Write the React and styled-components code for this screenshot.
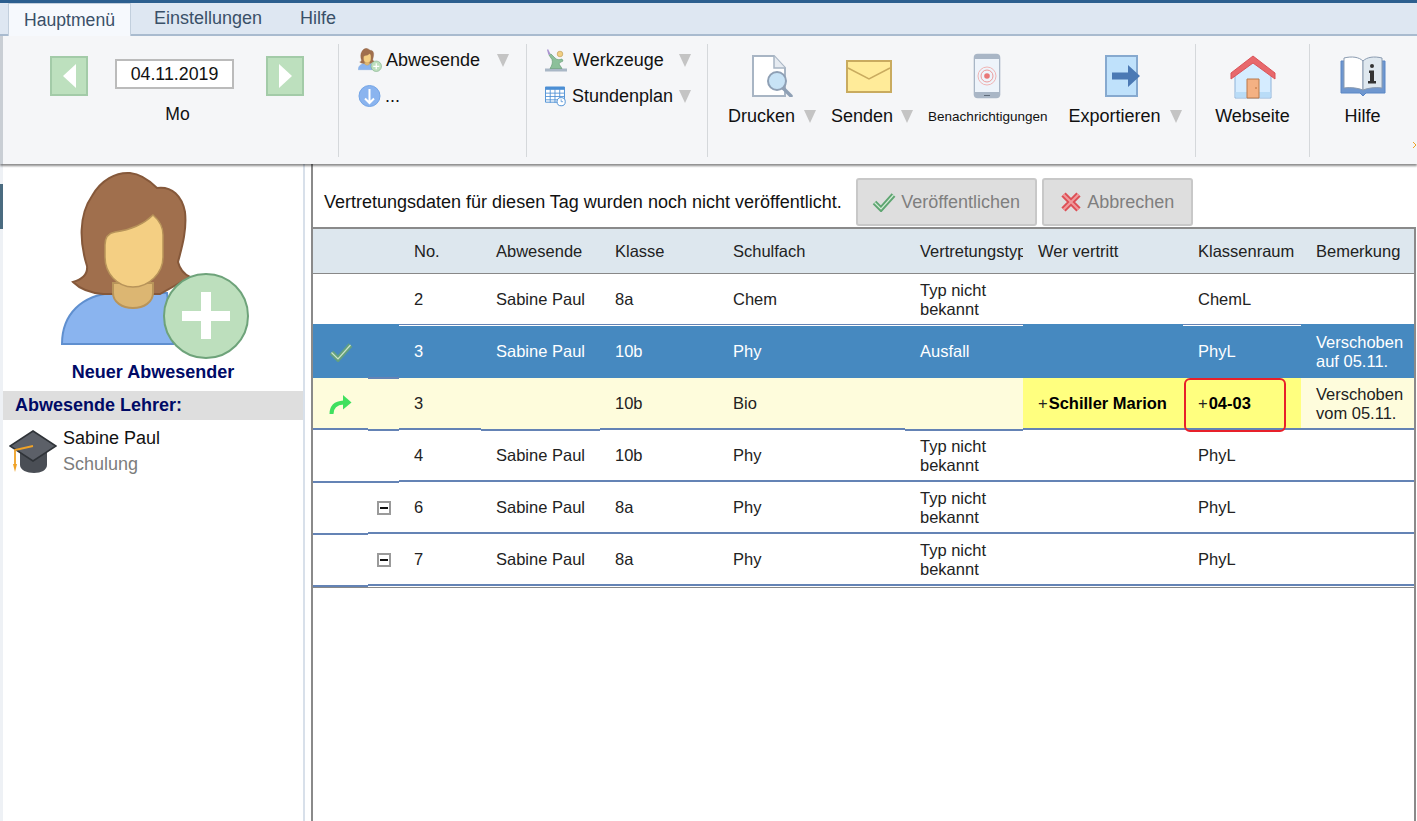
import React from 'react';
import styled, { createGlobalStyle } from 'styled-components';

const GlobalStyle = createGlobalStyle`
  html, body {
    margin: 0;
    padding: 0;
    height: 100%;
    overflow: hidden;
    background: #fff;
  }
  body {
    font-family: "Liberation Sans", Arial, sans-serif;
    color: #111;
  }
`;

const COLUMNS = '55px 31px 82px 119px 118px 187px 118px 160px 118px 113px';
const LINE = '#6483b5';
const BLUE = '#4689c0';
const SPLIT = `linear-gradient(${LINE} 50%, #fff 50%)`;

const rows = [
  {
    tone: 'plain',
    cells: ['2', 'Sabine Paul', '8a', 'Chem', 'Typ nicht bekannt', '', 'ChemL', ''],
    line: SPLIT,
    lineAt: { 0: BLUE, 1: BLUE, 7: BLUE, 9: BLUE },
    drops: [],
  },
  {
    tone: 'selected',
    mark: 'check',
    cells: ['3', 'Sabine Paul', '10b', 'Phy', 'Ausfall', '', 'PhyL', 'Verschoben auf 05.11.'],
    line: BLUE,
    lineAt: { 1: LINE },
    drops: [1],
  },
  {
    tone: 'moved',
    mark: 'arrow',
    cells: ['3', '', '10b', 'Bio', '', 'Schiller Marion', '04-03', 'Verschoben vom 05.11.'],
    added: [5, 6],
    boxed: 6,
    line: LINE,
    drops: [1, 3, 6],
  },
  {
    tone: 'plain',
    cells: ['4', 'Sabine Paul', '10b', 'Phy', 'Typ nicht bekannt', '', 'PhyL', ''],
    line: LINE,
    drops: [0, 1],
  },
  {
    tone: 'plain',
    toggle: true,
    cells: ['6', 'Sabine Paul', '8a', 'Phy', 'Typ nicht bekannt', '', 'PhyL', ''],
    line: LINE,
    drops: [0],
  },
  {
    tone: 'plain',
    toggle: true,
    cells: ['7', 'Sabine Paul', '8a', 'Phy', 'Typ nicht bekannt', '', 'PhyL', ''],
    line: LINE,
    drops: [0],
  },
];

const headers = ['', '', 'No.', 'Abwesende', 'Klasse', 'Schulfach', 'Vertretungstyp', 'Wer vertritt', 'Klassenraum', 'Bemerkung'];

const WomanIcon = ({ size, plusStroke = 2 }) => (
  <svg width={size} height={size} viewBox="60 170 192 192">
    <path d="M62 344c0-30 20-49 51-51h54l6 51z" fill="#8ab4ef" stroke="#5f8fcf" strokeWidth="2" />
    <path d="M73 282c10-3 15-8 14-16-7-22-9-50 5-70 9-16 24-24 38-23 11 1 20 8 27 15 15-2 25 8 28 24 2 18-3 35-7 50 2 8 6 12 12 15l-30 17H103c-12-1-23-5-30-12z" fill="#a06f4d" stroke="#85583a" strokeWidth="2" />
    <path d="M113 283h40v10c0 9-9 15-20 15s-20-6-20-15z" fill="#dcb672" stroke="#b8945a" strokeWidth="2" />
    <path d="M105 245c0-8 4-12 10-13 15-2 28-7 38-17 7 6 10 12 10 20v22c0 16-14 30-30 30s-28-14-28-30z" fill="#f4cf83" stroke="#b8945a" strokeWidth="1.5" />
    <circle cx="206" cy="316" r="42" fill="#bddfbd" stroke="#6ea37a" strokeWidth={plusStroke} />
    <path d="M201 292h10v19h19v10h-19v18h-10v-18h-19v-10h19z" fill="#fff" />
  </svg>
);

const InfoDownIcon = () => (
  <svg width="23" height="24" viewBox="0 0 23 24">
    <circle cx="11.500" cy="12" r="10.500" fill="#8ab4ef" stroke="#74a5e6" />
    <path d="M11.500 5v14M7 14.500l4.500 4.500 4.500-4.500" fill="none" stroke="#fff" strokeWidth="2" />
  </svg>
);

const ToolsIcon = () => (
  <svg width="22" height="24" viewBox="0 0 22 24">
    <path d="M0 20.500h22v3H0z" fill="#a9b7c6" />
    <path d="M5 20.500c2-3 3-6 2-9L4 7l2-1 4 4c2 2 4 2 7 1l1 2c-2 1-4 2-4 3l3 4.500z" fill="#8cc09a" stroke="#6a9d79" strokeWidth=".7" />
    <circle cx="15" cy="6" r="2.800" fill="#f2cf83" stroke="#c2a15c" strokeWidth=".7" />
    <path d="M3 1l2.500 5-2 1L2 2z" fill="#a994d0" />
  </svg>
);

const PlanIcon = () => (
  <svg width="22" height="22" viewBox="0 0 22 22">
    <path d="M.5 1.500h20v16H.5z" fill="#fff" stroke="#4b8ed4" />
    <path d="M.5 1.500h20v3H.5z" fill="#4b8ed4" />
    <path d="M5.500 4v14M10.500 4v14M15.500 4v14M1 8h19M1 11.500h19M1 15h19" stroke="#4b8ed4" strokeWidth=".9" fill="none" />
    <circle cx="17" cy="17" r="4.300" fill="#fff" stroke="#4b8ed4" />
    <path d="M17 14.500V17h2" fill="none" stroke="#4b8ed4" strokeWidth=".8" />
  </svg>
);

const PrintIcon = () => (
  <svg width="41" height="42" viewBox="0 0 41 42">
    <path d="M1 1h21l11 12v28H1z" fill="#fff" stroke="#a8b5c4" strokeWidth="2" />
    <path d="M22 1v12h11" fill="#e6ebf1" stroke="#a8b5c4" strokeWidth="1.500" />
    <path d="M31 33l8 8" stroke="#8fa0b5" strokeWidth="3.500" strokeLinecap="round" />
    <circle cx="25" cy="26" r="9" fill="#c8e3f6" stroke="#8fa0b5" strokeWidth="2" />
  </svg>
);

const MailIcon = () => (
  <svg width="46" height="33" viewBox="0 0 46 33">
    <path d="M1 1h44v31H1z" fill="#ffeb99" stroke="#c9ab5f" strokeWidth="2" />
    <path d="M2 8l21 11L44 8" fill="none" stroke="#c9ab5f" strokeWidth="1.500" />
  </svg>
);

const PhoneIcon = () => (
  <svg width="28" height="46" viewBox="0 0 28 46">
    <rect x=".7" y=".7" width="26.600" height="44.600" rx="4" fill="#a9b6c6" />
    <path d="M2 6h24v33H2z" fill="#eef4fb" />
    <circle cx="14" cy="23" r="9" fill="none" stroke="#f0b4b4" />
    <circle cx="14" cy="23" r="6" fill="none" stroke="#ec9a9a" />
    <circle cx="14" cy="23" r="2.800" fill="#e87878" />
    <path d="M11 42.500h6" stroke="#5f6b7a" />
  </svg>
);

const ExportIcon = () => (
  <svg width="36" height="42" viewBox="0 0 36 42">
    <path d="M1 1h31v40H1z" fill="#bfe1fb" stroke="#86a9cf" strokeWidth="2" />
    <path d="M7 17.500h16V10l12 11-12 11v-7.500H7z" fill="#4b79b4" />
  </svg>
);

const HomeIcon = () => (
  <svg width="46" height="46" viewBox="0 0 46 46">
    <path d="M5 18L23 6l18 12v27H5z" fill="#d5ecff" stroke="#8db2d8" />
    <path d="M5.500 39h35v5.500h-35z" fill="#b9dcf7" />
    <path d="M1 20v6L23 10l22 16v-6L23 3z" fill="#e8686c" stroke="#d95359" />
    <path d="M17 26h12v19H17z" fill="#f4b183" stroke="#b8794a" />
    <circle cx="26" cy="35" r=".8" fill="#b56a33" />
  </svg>
);

const BookIcon = () => (
  <svg width="46" height="42" viewBox="0 0 46 42">
    <path d="M1 6v32h19l3 3 3-3h19V6z" fill="#6f97cf" stroke="#5a86c5" />
    <path d="M4 3c8-2 15-1 19 3v29c-5-2-12-3-19-2z" fill="#fff" stroke="#8a9bb0" />
    <path d="M42 3c-8-2-15-1-19 3v29c5-2 12-3 19-2z" fill="#dfe8ef" stroke="#8a9bb0" />
    <circle cx="32" cy="11" r="2" fill="#333" />
    <path d="M29 15.500h5V26h2v2.500h-8V26h2v-8h-1z" fill="#333" />
  </svg>
);

const CapIcon = () => (
  <svg width="48" height="44" viewBox="0 0 48 44">
    <path d="M11 20v15c0 5 7 8 14 8s13-3 13-8V20z" fill="#4a4e55" />
    <path d="M24 1l23 15-23 15L1 16z" fill="#5c6068" stroke="#2f3338" strokeWidth="1.500" />
    <path d="M24 16L6 20v15" fill="none" stroke="#f0a226" strokeWidth="1.800" />
    <path d="M4 34h4l-2 8z" fill="#f0a226" />
  </svg>
);

const CheckIcon = ({ outer = '#5fa672', inner = '#d5ecd8' }) => (
  <svg width="24" height="20" viewBox="0 0 24 20">
    <path d="M2.500 10.500l6.500 6.500L21.500 3" fill="none" stroke={outer} strokeWidth="5" />
    <path d="M2.500 10.500l6.500 6.500L21.500 3" fill="none" stroke={inner} strokeWidth="1.200" />
  </svg>
);

const CrossIcon = () => (
  <svg width="22" height="22" viewBox="0 0 22 22">
    <path d="M3.500 3.500l15 15M18.500 3.500l-15 15" fill="none" stroke="#dd4f55" strokeWidth="6" />
    <path d="M3.500 3.500l15 15M18.500 3.500l-15 15" fill="none" stroke="#f09a9c" strokeWidth="2" />
  </svg>
);

const TurnArrowIcon = () => (
  <svg width="23" height="20" viewBox="0 0 23 20">
    <path d="M2.500 20c0-7 4-11 12-11.500" fill="none" stroke="#3fe05f" strokeWidth="4" />
    <path d="M14 1l8.500 7.500L14 15.500z" fill="#3fe05f" />
  </svg>
);

const OverflowIcon = () => (
  <svg width="4" height="8" viewBox="0 0 4 8">
    <path d="M0 1l3 3-3 3" fill="none" stroke="#f0a226" />
  </svg>
);

const Page = styled.div`
  height: 100vh;
  display: flex;
  flex-direction: column;
  overflow: hidden;
`;

const TopLine = styled.div`
  height: 3px;
  background: #2c5f8f;
`;

const TabBar = styled.div`
  display: flex;
  height: 33px;
  box-sizing: border-box;
  padding-left: 8px;
  background: #dee7f2;
  border-bottom: 2px solid #a9bbcf;
`;

const Tab = styled.div`
  height: ${(p) => (p.$active ? '33px' : '31px')};
  box-sizing: border-box;
  padding: 0 ${(p) => (p.$active ? '15px' : '19px')};
  margin-right: ${(p) => (p.$active ? '4px' : '0')};
  display: flex;
  align-items: center;
  font-size: ${(p) => (p.$active ? '17.6px' : '18px')};
  color: #3a5068;
  background: ${(p) => (p.$active ? '#f6f9fd' : 'transparent')};
  border: ${(p) => (p.$active ? '1px solid #c2cfdd' : 'none')};
  border-bottom: none;
`;

const Ribbon = styled.div`
  position: relative;
  z-index: 2;
  display: flex;
  height: 128px;
  box-sizing: border-box;
  padding-top: 8px;
  border-left: 3px solid #c9ced4;
  background: #f5f6f8;
  box-shadow: 0 2px 2px rgba(0, 0, 0, 0.45);
  overflow: hidden;
  flex-shrink: 0;
`;

const Group = styled.div`
  width: ${(p) => p.$width}px;
  height: 113px;
  box-sizing: border-box;
  flex-shrink: 0;
  padding: ${(p) => p.$pad || '0'};
  border-right: ${(p) => (p.$last ? 'none' : '1px solid #d5d8db')};
`;

const DateColumn = styled.div`
  width: 255px;
  margin: 12px 0 0 47px;
`;

const DateRow = styled.div`
  display: flex;
  align-items: center;
  gap: 27px;
`;

const NavButton = styled.div`
  width: 38px;
  height: 40px;
  box-sizing: border-box;
  flex-shrink: 0;
  display: flex;
  align-items: center;
  justify-content: center;
  background: #bde0be;
  border: 2px solid #a3cba8;
`;

const NavArrow = styled.span`
  width: 0;
  height: 0;
  border-top: 12px solid transparent;
  border-bottom: 12px solid transparent;
  border-right: ${(p) => (p.$right ? 'none' : '13px solid #fff')};
  border-left: ${(p) => (p.$right ? '13px solid #fff' : 'none')};
`;

const DateBox = styled.div`
  width: 119px;
  height: 30px;
  box-sizing: border-box;
  margin: 0 5px 4px 0;
  display: flex;
  align-items: center;
  justify-content: center;
  background: #fff;
  border: 2px solid #bbb;
  font-size: 17.8px;
  color: #111;
`;

const DayLabel = styled.div`
  margin-top: 8px;
  line-height: 20px;
  text-align: center;
  font-size: 17.6px;
`;

const MenuList = styled.div`
  display: flex;
  flex-direction: column;
  gap: 12px;
`;

const MenuRow = styled.div`
  height: 24px;
  display: flex;
  align-items: center;
  gap: ${(p) => p.$gap || 4}px;
  font-size: 18px;
  white-space: nowrap;
`;

const Caret = styled.span`
  width: 0;
  height: 0;
  flex-shrink: 0;
  margin-left: ${(p) => p.$offset || 'auto'};
  border-left: 6.5px solid transparent;
  border-right: 6.5px solid transparent;
  border-top: 13px solid #c4c4c4;
`;

const BigButtons = styled.div`
  display: flex;
  padding-left: 20px;
`;

const BigButton = styled.div`
  display: flex;
  flex-direction: column;
  align-items: center;
  margin-right: ${(p) => p.$space || 0}px;
`;

const BigIcon = styled.div`
  height: 46px;
  margin: 9px ${(p) => p.$nudge || 0}px 0 0;
  display: flex;
  align-items: center;
  justify-content: center;
`;

const BigLabel = styled.div`
  height: 24px;
  margin-top: 5px;
  display: flex;
  align-items: center;
  white-space: nowrap;
  font-size: ${(p) => (p.$small ? '13.5px' : '18px')};
`;

const OverflowMark = styled.span`
  position: absolute;
  right: 0;
  top: 105px;
  display: flex;
`;

const Main = styled.div`
  flex: 1;
  display: flex;
  min-height: 0;
`;

const Rail = styled.div`
  width: 3px;
  flex-shrink: 0;
  background: #eef1f5;
`;

const RailMark = styled.div`
  height: 45px;
  margin-top: 20px;
  background: #4a6b80;
`;

const Sidebar = styled.aside`
  width: 300px;
  flex-shrink: 0;
`;

const NewAbsence = styled.div`
  padding-top: 6px;
  display: flex;
  flex-direction: column;
  align-items: center;
`;

const AvatarSlot = styled.div`
  height: 192px;
  margin-left: 6px;
`;

const NewLabel = styled.div`
  line-height: 20px;
  font-size: 18px;
  font-weight: bold;
  color: #000a66;
`;

const SideHeading = styled.div`
  height: 29px;
  margin-top: 9px;
  padding-left: 12px;
  display: flex;
  align-items: center;
  background: #dedede;
  font-size: 18px;
  font-weight: bold;
  color: #000a66;
`;

const Teacher = styled.div`
  display: flex;
  gap: 6px;
  padding: 5px 0 0 6px;
`;

const TeacherIcon = styled.div`
  margin-top: 5px;
`;

const TeacherName = styled.div`
  line-height: 26px;
  font-size: 18px;
`;

const TeacherNote = styled(TeacherName)`
  color: #7c7c7c;
`;

const Gutter = styled.div`
  width: 8px;
  flex-shrink: 0;
  box-sizing: border-box;
  border-left: 2px solid #d8e0ea;
`;

const Content = styled.div`
  flex: 1;
  min-width: 0;
  display: flex;
  flex-direction: column;
`;

const StatusBar = styled.div`
  height: 64px;
  box-sizing: border-box;
  padding: 12px 0 0 11px;
  display: flex;
  align-items: center;
  border-left: 2px solid #8a8a8a;
  font-size: 18px;
`;

const StatusText = styled.span`
  margin-top: 1px;
`;

const ActionButton = styled.div`
  height: 48px;
  width: ${(p) => p.$width}px;
  margin-left: ${(p) => p.$space}px;
  box-sizing: border-box;
  display: flex;
  align-items: center;
  justify-content: center;
  gap: 5px;
  background: #dedede;
  border: 2px solid #c8c8c8;
  border-radius: 3px;
  font-size: 18px;
  color: #7f7f7f;
`;

const TableWrap = styled.div`
  flex: 1;
  width: 1105px;
  box-sizing: border-box;
  border-top: 2px solid #8a8a8a;
  border-left: 2px solid #8a8a8a;
  border-right: 2px solid #8a8a8a;
  margin-top: -1px;
  font-size: 16.5px;
`;

const HeaderRow = styled.div`
  display: grid;
  grid-template-columns: ${COLUMNS};
  height: 45px;
  box-sizing: border-box;
  background: #dde7ee;
  border-bottom: 1px solid #888;
`;

const HeaderCell = styled.div`
  padding-left: 15px;
  display: flex;
  align-items: center;
  overflow: hidden;
  white-space: nowrap;
  color: #222;
`;

const tones = {
  plain: { bg: '#fff', fg: '#222' },
  selected: { bg: BLUE, fg: '#fff' },
  moved: { bg: '#fefcdc', fg: '#222' },
};

const Row = styled.div`
  display: grid;
  grid-template-columns: ${COLUMNS};
  height: 52px;
  background: ${(p) => tones[p.$tone].bg};
  color: ${(p) => tones[p.$tone].fg};
`;

const Cell = styled.div`
  position: relative;
  padding: 0 0 1px 15px;
  box-sizing: border-box;
  display: flex;
  align-items: center;
  line-height: 19px;
  background: ${(p) => (p.$added ? '#ffff7f' : 'transparent')};

  &::after {
    content: '';
    position: absolute;
    z-index: 1;
    left: 0;
    right: 0;
    height: 2px;
    bottom: ${(p) => (p.$drop ? '-1px' : '0')};
    background: ${(p) => p.$line};
  }
`;

const MarkCell = styled(Cell)`
  padding-left: 16px;
`;

const ToggleCell = styled(Cell)`
  padding-left: 9px;
`;

const Toggle = styled.span`
  width: 14px;
  height: 14px;
  box-sizing: border-box;
  display: flex;
  align-items: center;
  justify-content: center;
  background: #fff;
  border: 2px solid #9a9a9a;

  &::before {
    content: '';
    width: 8px;
    height: 2px;
    background: #111;
  }
`;

const AddedName = styled.b`
  margin-left: 1px;
  color: #000;
`;

const RedBox = styled.span`
  position: absolute;
  z-index: 2;
  left: 1px;
  top: 0;
  width: 102px;
  height: 54px;
  box-sizing: border-box;
  border: 2px solid #e8202a;
  border-radius: 6px;
`;

const TableEnd = styled.div`
  height: 1px;
  margin-top: 1px;
  background: #888;
`;

const LeftTools = () => (
  <>
    <Group $width={336}>
      <DateColumn>
        <DateRow>
          <NavButton><NavArrow /></NavButton>
          <DateBox>04.11.2019</DateBox>
          <NavButton><NavArrow $right /></NavButton>
        </DateRow>
        <DayLabel>Mo</DayLabel>
      </DateColumn>
    </Group>
    <Group $width={188} $pad="4px 17px 0 19px">
      <MenuList>
        <MenuRow>
          <WomanIcon size={24} plusStroke={4} />
          Abwesende
          <Caret />
        </MenuRow>
        <MenuRow>
          <InfoDownIcon />
          <span>...</span>
        </MenuRow>
      </MenuList>
    </Group>
    <Group $width={181} $pad="4px 16px 0 18px">
      <MenuList>
        <MenuRow $gap={6}>
          <ToolsIcon />
          Werkzeuge
          <Caret />
        </MenuRow>
        <MenuRow $gap={6}>
          <PlanIcon />
          Stundenplan
          <Caret />
        </MenuRow>
      </MenuList>
    </Group>
  </>
);

const RightTools = () => (
  <>
    <Group $width={488}>
      <BigButtons>
        <BigButton $space={15}>
          <BigIcon><PrintIcon /></BigIcon>
          <BigLabel>Drucken<Caret $offset="9px" /></BigLabel>
        </BigButton>
        <BigButton $space={15}>
          <BigIcon $nudge={6}><MailIcon /></BigIcon>
          <BigLabel>Senden<Caret $offset="8px" /></BigLabel>
        </BigButton>
        <BigButton $space={21}>
          <BigIcon $nudge={2}><PhoneIcon /></BigIcon>
          <BigLabel $small>Benachrichtigungen</BigLabel>
        </BigButton>
        <BigButton>
          <BigIcon $nudge={4}><ExportIcon /></BigIcon>
          <BigLabel>Exportieren<Caret $offset="9px" /></BigLabel>
        </BigButton>
      </BigButtons>
    </Group>
    <Group $width={114}>
      <BigButton>
        <BigIcon><HomeIcon /></BigIcon>
        <BigLabel>Webseite</BigLabel>
      </BigButton>
    </Group>
    <Group $width={105} $last>
      <BigButton>
        <BigIcon><BookIcon /></BigIcon>
        <BigLabel>Hilfe</BigLabel>
      </BigButton>
    </Group>
    <OverflowMark><OverflowIcon /></OverflowMark>
  </>
);

const TableRow = ({ row }) => {
  const lineFor = (i) => (row.lineAt && row.lineAt[i]) || row.line;
  const dropFor = (i) => row.drops.includes(i);

  return (
    <Row $tone={row.tone}>
      <MarkCell $line={lineFor(0)} $drop={dropFor(0)}>
        {row.mark === 'check' && <CheckIcon outer="#64a07f" inner="#cde6c8" />}
        {row.mark === 'arrow' && <TurnArrowIcon />}
      </MarkCell>
      <ToggleCell $line={lineFor(1)} $drop={dropFor(1)}>
        {row.toggle && <Toggle />}
      </ToggleCell>
      {row.cells.map((text, i) => {
        const added = row.added && row.added.includes(i);
        return (
          <Cell key={i} $line={lineFor(i + 2)} $drop={dropFor(i + 2)} $added={added}>
            {added ? <span>+<AddedName>{text}</AddedName></span> : <span>{text}</span>}
            {row.boxed === i && <RedBox />}
          </Cell>
        );
      })}
    </Row>
  );
};

const App = () => (
  <Page>
    <GlobalStyle />
    <TopLine />
    <TabBar>
      <Tab $active>Hauptmenü</Tab>
      <Tab>Einstellungen</Tab>
      <Tab>Hilfe</Tab>
    </TabBar>
    <Ribbon>
      <LeftTools />
      <RightTools />
    </Ribbon>
    <Main>
      <Rail><RailMark /></Rail>
      <Sidebar>
        <NewAbsence>
          <AvatarSlot><WomanIcon size={192} /></AvatarSlot>
          <NewLabel>Neuer Abwesender</NewLabel>
        </NewAbsence>
        <SideHeading>Abwesende Lehrer:</SideHeading>
        <Teacher>
          <TeacherIcon><CapIcon /></TeacherIcon>
          <div>
            <TeacherName>Sabine Paul</TeacherName>
            <TeacherNote>Schulung</TeacherNote>
          </div>
        </Teacher>
      </Sidebar>
      <Gutter />
      <Content>
        <StatusBar>
          <StatusText>Vertretungsdaten für diesen Tag wurden noch nicht veröffentlicht.</StatusText>
          <ActionButton $width={181} $space={14}>
            <CheckIcon /> Veröffentlichen
          </ActionButton>
          <ActionButton $width={151} $space={5}>
            <CrossIcon /> Abbrechen
          </ActionButton>
        </StatusBar>
        <TableWrap>
          <HeaderRow>
            {headers.map((title, i) => <HeaderCell key={i}>{title}</HeaderCell>)}
          </HeaderRow>
          {rows.map((row, i) => <TableRow key={i} row={row} />)}
          <TableEnd />
        </TableWrap>
      </Content>
    </Main>
  </Page>
);

export default App;
